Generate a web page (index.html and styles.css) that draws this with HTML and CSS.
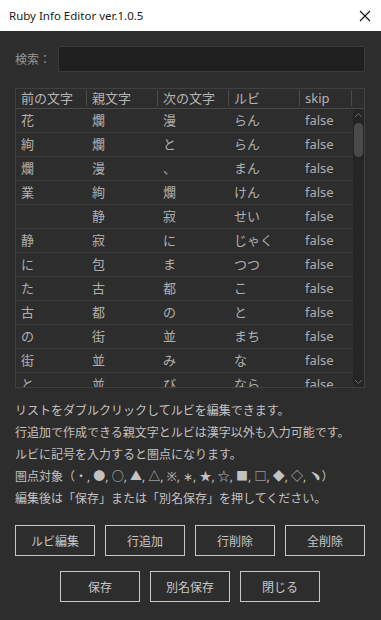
FILE: index.html
```html
<!DOCTYPE html>
<html lang="ja">
  <head>
    <meta charset="utf-8">
    <meta name="viewport" content="width=device-width, initial-scale=1.0">
    <title>Ruby Info Editor</title>
    <link rel="stylesheet" href="styles.css">
  </head>
  <body>

    <!-- Title bar -->
    <div class="titlebar">
      <span class="title">Ruby Info Editor ver.1.0.5</span>
      <svg class="close" width="12" height="12" viewBox="0 0 12 12">
        <path d="M1 1 L11 11 M11 1 L1 11" stroke="#111" stroke-width="1.1" fill="none"/>
      </svg>
    </div>

    <div class="content">
      <!-- Search -->
      <div class="search">
        <label class="search-label">検索：</label>
        <input class="search-input" type="text">
      </div>

      <!-- Ruby list -->
      <div class="list">
        <div class="list-head">
          <div class="cell">前の文字</div>
          <div class="cell">親文字</div>
          <div class="cell">次の文字</div>
          <div class="cell">ルビ</div>
          <div class="cell">skip</div>
          <div class="cell"></div>
        </div>
        <div class="list-body">
          <div class="rows" id="rows"></div>
          <div class="scrollbar">
            <svg class="arrow" width="9" height="6" viewBox="0 0 9 6"><path d="M1 5 L4.5 1.5 L8 5" stroke="#6a6a6a" fill="none"/></svg>
            <div class="thumb"></div>
            <div class="track-fill"></div>
            <svg class="arrow" width="9" height="6" viewBox="0 0 9 6"><path d="M1 1 L4.5 4.5 L8 1" stroke="#6a6a6a" fill="none"/></svg>
          </div>
        </div>
      </div>

      <!-- Help text -->
      <div class="info">
        <p>リストをダブルクリックしてルビを編集できます。</p>
        <p>行追加で作成できる親文字とルビは漢字以外も入力可能です。</p>
        <p>ルビに記号を入力すると圏点になります。</p>
        <p>圏点対象（・, ●, ○, ▲, △, ※, ∗, ★, ☆, ■, □, ◆, ◇, ﹅）</p>
        <p>編集後は「保存」または「別名保存」を押してください。</p>
      </div>

      <!-- Buttons -->
      <div class="buttons">
        <button class="btn">ルビ編集</button>
        <button class="btn">行追加</button>
        <button class="btn">行削除</button>
        <button class="btn">全削除</button>
      </div>
      <div class="buttons center">
        <button class="btn">保存</button>
        <button class="btn">別名保存</button>
        <button class="btn">閉じる</button>
      </div>
    </div>

    <script>
      // rows of the ruby table
      const rubyRows = [
        ["花", "爛", "漫", "らん", "false"],
        ["絢", "爛", "と", "らん", "false"],
        ["爛", "漫", "、", "まん", "false"],
        ["業", "絢", "爛", "けん", "false"],
        ["", "静", "寂", "せい", "false"],
        ["静", "寂", "に", "じゃく", "false"],
        ["に", "包", "ま", "つつ", "false"],
        ["た", "古", "都", "こ", "false"],
        ["古", "都", "の", "と", "false"],
        ["の", "街", "並", "まち", "false"],
        ["街", "並", "み", "な", "false"],
        ["と", "並", "び", "なら", "false"]
      ];

      const rowsBox = document.getElementById("rows");
      rubyRows.forEach(function (r) {
        const row = document.createElement("div");
        row.className = "row";
        r.forEach(function (v) {
          const c = document.createElement("div");
          c.className = "cell";
          c.textContent = v;
          row.appendChild(c);
        });
        rowsBox.appendChild(row);
      });
    </script>

  </body>
</html>
```

FILE: styles.css
```css
body {
  margin: 0;
  background-color: #2d2d2d;
  font-family: "Noto Sans", "Noto Sans CJK JP", sans-serif;
  color: #c4c4c4;
  height: 620px;
  overflow: hidden;
}

.titlebar {
  height: 31px;
  background-color: #fff;
  display: flex;
  align-items: center;
  justify-content: space-between;
  padding: 0 10px 0 9px;
  color: #1a1a1a;
  font-size: 11.5px;
}

.close {
  margin-top: 1px;
}

.content {
  padding: 15px 16px 0 15px;
}

.search {
  display: flex;
  align-items: center;
  height: 26px;
}

.search-label {
  width: 43px;
  font-size: 12px;
  color: #969696;
}

.search-input {
  flex: 1;
  height: 26px;
  box-sizing: border-box;
  background-color: #1f1f1f;
  border: 1px solid #3a3a3a;
  border-radius: 2px;
  outline: none;
}

.list {
  margin-top: 16px;
  height: 300px;
  box-sizing: border-box;
  border: 1px solid #404040;
  overflow: hidden;
  font-size: 13px;
}

.list-head {
  display: grid;
  grid-template-columns: 71px 71px 71px 71px 52px 1fr;
  height: 19px;
  border-bottom: 1px solid #484848;
}

.list-head .cell {
  border-right: 1px solid #4c4c4c;
  margin: 1px 0 2px;
  line-height: 16px;
  color: #b4b4b4;
}

.list-head .cell:last-child {
  border-right: none;
}

.cell {
  box-sizing: border-box;
  padding-left: 5px;
  white-space: nowrap;
}

.list-body {
  display: flex;
}

.rows {
  width: 337px;
}

.row {
  display: grid;
  grid-template-columns: 71px 71px 71px 71px 52px 1fr;
  height: 24px;
  box-sizing: border-box;
  border-bottom: 1px solid #3b3b3b;
  line-height: 23px;
  color: #afafaf;
}

.scrollbar {
  flex: 1;
  height: 280px;
  background-color: #252525;
  display: flex;
  flex-direction: column;
  align-items: center;
  padding: 3px 0 4px;
  box-sizing: border-box;
}

.thumb {
  width: 9px;
  height: 34px;
  margin-top: 5px;
  border-radius: 5px;
  background-color: #4a4a4a;
}

.track-fill {
  flex: 1;
}

.info {
  margin-top: 12px;
  font-size: 12px;
  color: #c2c2c2;
}

.info p {
  margin: 0;
  line-height: 22px;
  white-space: nowrap;
}

.buttons {
  display: flex;
  gap: 10px;
  margin-top: 15px;
}

.buttons.center {
  justify-content: center;
}

.btn {
  width: 80px;
  height: 31px;
  background-color: transparent;
  border: 1px solid #c8c8c8;
  color: #c6c6c6;
  font-family: "Noto Sans CJK JP", sans-serif;
  font-size: 12px;
  padding: 0;
}
```
